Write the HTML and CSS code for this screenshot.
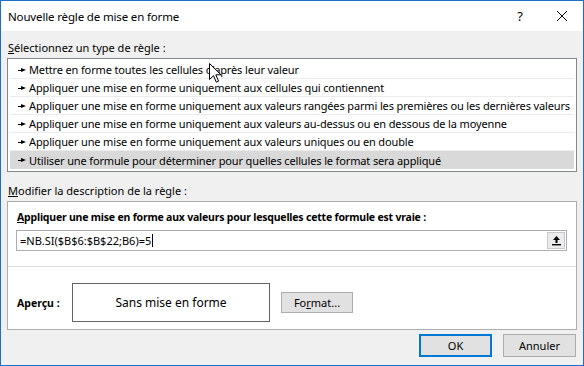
FILE: index.html
```html
<!DOCTYPE html>
<html lang="fr">
<head>
    <meta charset="UTF-8">
    <title>Nouvelle règle de mise en forme</title>
    <link rel="stylesheet" href="styles.css">
</head>
<body>

    <div class="dialog">
        <div class="titlebar">
            <span class="title">Nouvelle règle de mise en forme</span>
            <span class="help">?</span>
            <span class="close">
                <svg width="12" height="12" viewBox="0 0 12 12"><path d="M1 1 L11 11 M11 1 L1 11" stroke="#000" stroke-width="1" fill="none"/></svg>
            </span>
        </div>

        <div class="content">
            <div class="section-label"><u>S</u>électionnez un type de règle :</div>
            <ul class="rule-list">
                <li><span class="arrow"></span>Mettre en forme toutes les cellules d'après leur valeur</li>
                <li><span class="arrow"></span>Appliquer une mise en forme uniquement aux cellules qui contiennent</li>
                <li><span class="arrow"></span>Appliquer une mise en forme uniquement aux valeurs rangées parmi les premières ou les dernières valeurs</li>
                <li><span class="arrow"></span>Appliquer une mise en forme uniquement aux valeurs au-dessus ou en dessous de la moyenne</li>
                <li><span class="arrow"></span>Appliquer une mise en forme uniquement aux valeurs uniques ou en double</li>
                <li class="selected"><span class="arrow"></span>Utiliser une formule pour déterminer pour quelles cellules le format sera appliqué</li>
            </ul>

            <div class="section-label second"><u>M</u>odifier la description de la règle :</div>
            <div class="panel">
                <div class="panel-title"><u>A</u>ppliquer une mise en forme aux valeurs pour lesquelles cette formule est vraie :</div>
                <div class="formula">
                    <span class="formula-text">=NB.SI($B$6:$B$22;B6)=5<span class="caret"></span></span>
                    <span class="collapse-btn">
                        <svg width="11" height="11" viewBox="0 0 11 11"><path d="M5.5 1 L9 5 L6.5 5 L6.5 8 L4.5 8 L4.5 5 L2 5 Z" fill="#000"/><rect x="1" y="9" width="9" height="1.4" fill="#000"/></svg>
                    </span>
                </div>
                <div class="separator"></div>
                <div class="preview-row">
                    <span class="preview-label">Aperçu :</span>
                    <div class="preview-box">Sans mise en forme</div>
                    <button class="btn format-btn">Fo<u>r</u>mat...</button>
                </div>
            </div>

            <div class="actions">
                <button class="btn default">OK</button>
                <button class="btn">Annuler</button>
            </div>
        </div>

        <svg class="pointer" width="13" height="21" viewBox="0 0 13 21">
            <path d="M0.5 0.5 L0.5 16.5 L4.5 12.7 L7.3 19.2 L9.6 18.2 L6.8 11.8 L12 11.8 Z" fill="#fff" stroke="#000" stroke-width="1" stroke-linejoin="miter"/>
        </svg>
    </div>

</body>
</html>
```

FILE: styles.css
```css
body {
    margin: 0;
    font-family: 'Noto Sans', 'Open Sans', sans-serif;
    font-size: 11px;
    color: #000;
}

.dialog {
    position: relative;
    width: 584px;
    height: 366px;
    box-sizing: border-box;
    border: 1px solid #1c6fc1;
    background-color: #f0f0f0;
    display: flex;
    flex-direction: column;
}

.titlebar {
    height: 30px;
    background-color: #ffffff;
    display: flex;
    align-items: center;
    padding-left: 7px;
}

.title {
    font-size: 11.5px;
    letter-spacing: -0.15px;
    flex: 1;
}

.help {
    font-size: 13px;
    width: 30px;
    text-align: center;
    margin-right: 12px;
}

.close {
    width: 30px;
    display: flex;
    justify-content: center;
    margin-right: 6px;
}

.content {
    padding: 0 6px;
    display: flex;
    flex-direction: column;
}

.section-label {
    line-height: 16px;
    margin-top: 9px;
    margin-bottom: 2px;
    padding-left: 1px;
}

.section-label.second {
    margin-top: 11px;
}

.rule-list {
    list-style: none;
    margin: 0;
    padding: 2px;
    background-color: #ffffff;
    border: 1px solid #828790;
}

.rule-list li {
    height: 18px;
    line-height: 17px;
    box-sizing: border-box;
    border-bottom: 1px solid #ececec;
    padding-left: 8px;
    white-space: nowrap;
    overflow: hidden;
    display: flex;
    align-items: center;
    letter-spacing: -0.14px;
}

.rule-list li:last-child {
    border-bottom: none;
}

.rule-list li.selected {
    background-color: #d9d9d9;
}

.arrow {
    display: inline-block;
    position: relative;
    flex-shrink: 0;
    width: 8px;
    height: 5px;
    margin-right: 3px;
    margin-top: 1px;
}

.arrow::before {
    content: "";
    position: absolute;
    left: 0;
    top: 2px;
    width: 4px;
    height: 1px;
    background: #000;
}

.arrow::after {
    content: "";
    position: absolute;
    left: 3px;
    top: 0;
    border-left: 5px solid #000;
    border-top: 2.5px solid transparent;
    border-bottom: 2.5px solid transparent;
}

.panel {
    background-color: #ffffff;
    border: 1px solid #adadad;
    height: 129px;
    box-sizing: border-box;
    padding: 7px 9px 0 8px;
}

.panel-title {
    font-weight: bold;
    font-size: 10.5px;
    letter-spacing: -0.2px;
    line-height: 16px;
    padding-left: 1px;
}

.formula {
    margin-top: 5px;
    height: 21px;
    box-sizing: border-box;
    border: 1px solid #abadb3;
    display: flex;
    align-items: center;
    padding-left: 3px;
}

.formula-text {
    flex: 1;
    display: flex;
    align-items: center;
}

.caret {
    display: inline-block;
    width: 1px;
    height: 13px;
    background: #000;
    margin-left: 1px;
}

.collapse-btn {
    width: 18px;
    height: 17px;
    box-sizing: border-box;
    border: 1px solid #c8c8c8;
    background-color: #ececec;
    display: flex;
    align-items: center;
    justify-content: center;
    margin-right: 1px;
}

.separator {
    height: 1px;
    background-color: #dcdcdc;
    margin: 15px -9px 0 -8px;
}

.preview-row {
    display: flex;
    align-items: center;
    margin-top: 16px;
}

.preview-label {
    font-weight: bold;
    font-size: 10.5px;
    width: 55px;
    padding-left: 1px;
}

.preview-box {
    width: 198px;
    height: 39px;
    box-sizing: border-box;
    border: 1px solid #646464;
    display: flex;
    align-items: center;
    justify-content: center;
    font-size: 12px;
}

.btn {
    font-family: inherit;
    font-size: 11px;
    background-color: #e1e1e1;
    border: 1px solid #adadad;
    height: 23px;
    width: 73px;
    padding: 0;
    color: #000;
}

.format-btn {
    margin-left: 11px;
    width: 72px;
    height: 21px;
}

.btn.default {
    border: 2px solid #0078d7;
}

.actions {
    display: flex;
    justify-content: flex-end;
    gap: 11px;
    margin-top: 4px;
    padding-right: 1px;
}

.pointer {
    position: absolute;
    left: 208px;
    top: 62px;
}
```
